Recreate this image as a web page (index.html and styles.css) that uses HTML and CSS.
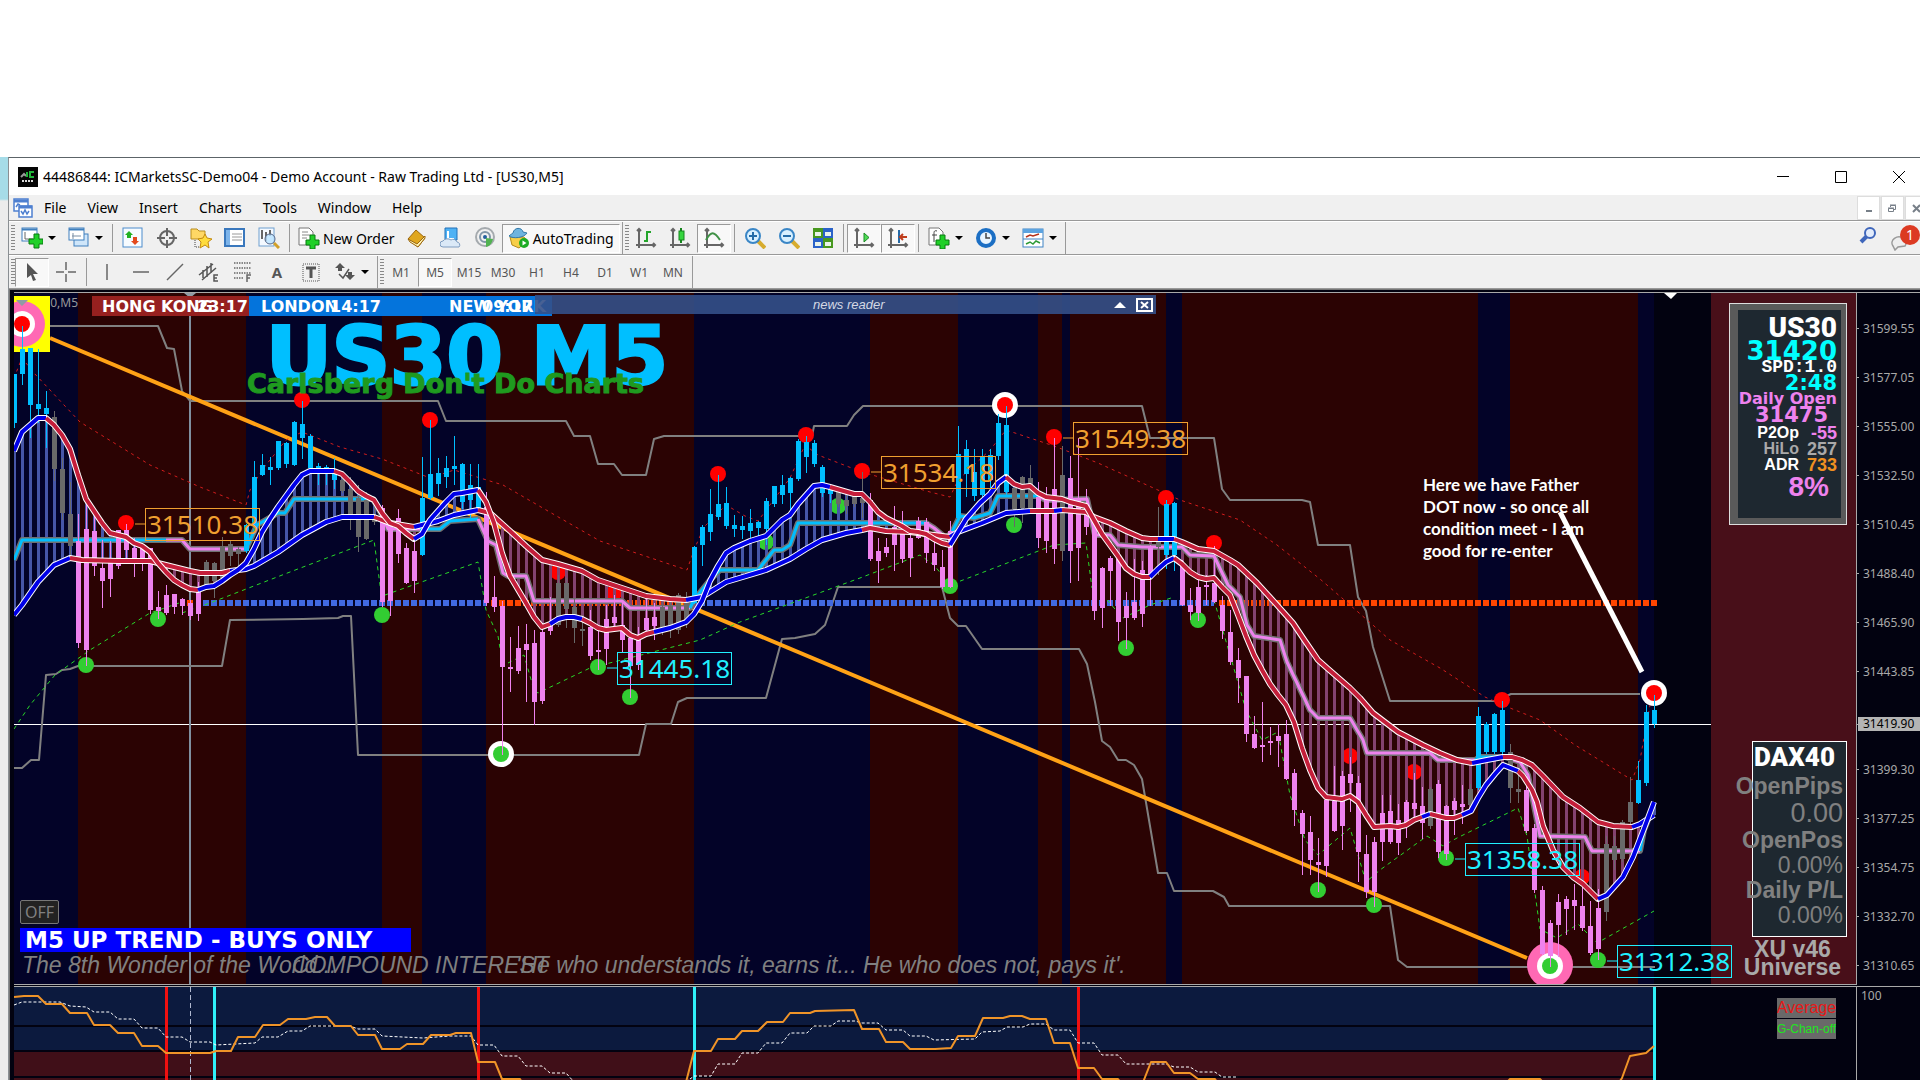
FILE: index.html
```html
<!DOCTYPE html>
<html lang="en">

<head>
    <meta charset="UTF-8">
    <meta name="viewport" content="width=device-width, initial-scale=1.0">
    <title>44486844: ICMarketsSC-Demo04 - Demo Account - Raw Trading Ltd - [US30,M5]</title>
    <link rel="stylesheet" href="styles.css">
</head>

<body>
    <div class="desktop">
        <div class="wallpaper"></div>
        <div class="window">
            <header class="titlebar">
                <svg class="app-icon" width="20" height="20" viewBox="0 0 20 20"><rect width="20" height="20" fill="#050505"/><path d="M3 10l3-3 2 2" stroke="#999" stroke-width="2" fill="none"/><path d="M9 5v5M16 5h-4v5h4" stroke="#21b53a" stroke-width="2" fill="none"/><path d="M4 14h12" stroke="#ddd" stroke-width="2" stroke-dasharray="2 1"/></svg>
                <h1>44486844: ICMarketsSC-Demo04 - Demo Account - Raw Trading Ltd - [US30,M5]</h1>
                <div class="win-buttons">
                    <button aria-label="Minimize"><svg width="12" height="12"><path d="M0 5.5h12" stroke="#000"/></svg></button>
                    <button aria-label="Maximize"><svg width="12" height="12"><path d="M.5.5h11v11H.5z" stroke="#000" fill="none"/></svg></button>
                    <button aria-label="Close"><svg width="12" height="12"><path d="M0 0l12 12M12 0L0 12" stroke="#000"/></svg></button>
                </div>
            </header>

            <nav class="menu">
                <svg width="20" height="20" viewBox="0 0 20 20" fill="#fff" stroke="#4d7fd0" stroke-width="1.5"><rect x="1" y="1" width="14" height="12"/><path d="M1 3h14" stroke-width="3"/><rect x="6" y="8" width="13" height="11"/><path d="M6 9h13" stroke-width="3"/><path d="M3 9l2-3 2 1M8 13l2 3 2-4 2 4 2-3" fill="none"/></svg>
                <button>File</button><button>View</button><button>Insert</button><button>Charts</button><button>Tools</button><button>Window</button><button>Help</button>
                <div class="mdi">
                    <button aria-label="Minimize chart"><svg width="8" height="8"><path d="M1 6h6" stroke="#777f88" stroke-width="2"/></svg></button>
                    <button aria-label="Restore chart"><svg width="9" height="9" fill="none" stroke="#777f88"><path d="M2.5 3V1.5h5v4H6M.5 4.5h5v3h-5zM2 1h6M0 4h6"/></svg></button>
                    <button aria-label="Close chart"><svg width="9" height="9"><path d="M1 1l7 7M8 1L1 8" stroke="#777f88" stroke-width="2"/></svg></button>
                </div>
            </nav>

            <div class="toolbar">
                <i class="grip"></i>
                <button class="tool drop" aria-label="New chart"><svg viewBox="0 0 22 22"><rect x="1" y="1" width="15" height="13" fill="#fff" stroke="#3f7fbd"/><path d="M1 2.5h15" stroke="#3f7fbd" stroke-width="2"/><path d="M4 5v7h8" stroke="#666" fill="none"/><path d="M13 7h5v5h4v5h-4v4h-5v-4H8v-5h5z" fill="#20d028" stroke="#087a10"/></svg></button>
                <button class="tool drop" aria-label="Profiles"><svg viewBox="0 0 22 22"><rect x="6" y="7" width="14" height="12" fill="#cfe6fa" stroke="#3f7fbd"/><rect x="1" y="1" width="15" height="12" fill="#fff" stroke="#3f7fbd"/><path d="M1 2.5h15" stroke="#3f7fbd" stroke-width="2"/><path d="M4 9h9M5 6v6" stroke="#7a8fa5"/></svg></button>
                <i class="sep"></i>
                <button class="tool" aria-label="Market watch"><svg viewBox="0 0 22 22"><rect x="1" y="1" width="19" height="19" fill="#f6fbff" stroke="#4c8ccc"/><path d="M3 8l4-4 4 4H9v3H5V8z" fill="#23b023"/><path d="M9 14l4 4 4-4h-2v-4h-4v4z" fill="#e3491c"/></svg></button>
                <button class="tool" aria-label="Data window"><svg viewBox="0 0 22 22" fill="none" stroke="#666" stroke-width="2"><circle cx="11" cy="11" r="7"/><path d="M11 1v8M11 13v8M1 11h8M13 11h8"/></svg></button>
                <button class="tool" aria-label="Navigator"><svg viewBox="0 0 22 22"><path d="M1 2h6l2 2h6v8H1z" fill="#ffd865" stroke="#b98d1e"/><path d="M5 13v7h5" stroke="#444" fill="none" stroke-dasharray="1 1"/><path d="M15 7l2 4 5 1-4 3 1 6-4-3-5 3 1-6-3-3 5-1z" fill="#ffdc3c" stroke="#c48a10"/></svg></button>
                <button class="tool" aria-label="Terminal"><svg viewBox="0 0 22 22"><rect x="1" y="2" width="19" height="17" fill="#fff" stroke="#3a78bd" stroke-width="2"/><path d="M4 3v15" stroke="#7db4ea" stroke-width="4"/><path d="M8 7h10M8 10h10M8 13h10" stroke="#999"/></svg></button>
                <button class="tool" aria-label="Strategy tester"><svg viewBox="0 0 22 22"><rect x="1" y="1" width="15" height="18" fill="#f4f9ff" stroke="#6f9fd0"/><path d="M4 3v9M8 5v9M12 3v6" stroke="#666" stroke-width="2"/><circle cx="12" cy="12" r="5" fill="#b9e2ff" fill-opacity=".8" stroke="#568"/><path d="M16 16l5 5" stroke="#d2a02a" stroke-width="3"/></svg></button>
                <i class="sep"></i>
                <button class="tool labelled"><svg viewBox="0 0 22 22"><path d="M1 1h10l4 4v13H1z" fill="#fff" stroke="#777"/><path d="M4 5h6M4 8h8M4 11h5" stroke="#888"/><path d="M12 8h5v5h4v5h-4v4h-5v-4H8v-5h4z" fill="#20d028" stroke="#087a10"/></svg>New Order</button>
                <button class="tool" aria-label="MetaEditor"><svg viewBox="0 0 22 22"><path d="M2 12L10 3l9 8-7 9z" fill="#e0a71f" stroke="#9b6710"/><path d="M2 12l2 3 8 5 7-9v-2l-8 8z" fill="#fff2b0" stroke="#9b6710"/></svg></button>
                <button class="tool" aria-label="VPS"><svg viewBox="0 0 22 22"><path d="M5 1h12v12H5z" fill="#4fb2f4" stroke="#2371b8"/><path d="M8 4v8h6" stroke="#fff" stroke-width="2" fill="none"/><path d="M3 20a3 3 0 010-6 5 4 0 018-1 4 4 0 016 2 3 3 0 012 5z" fill="#dbe9f7" stroke="#7e9cc0"/></svg></button>
                <button class="tool" aria-label="Signals"><svg viewBox="0 0 22 22" fill="none"><circle cx="11" cy="10" r="9" stroke="#a5aaae" stroke-width="2"/><circle cx="11" cy="10" r="5" stroke="#8196a8" stroke-width="2"/><circle cx="11" cy="10" r="2" fill="#225f9d"/><path d="M12 11v9c5-1 6-5 7-8" fill="#51b251"/></svg></button>
                <button class="tool labelled on"><svg viewBox="0 0 22 22"><path d="M2 10l14 0 3 4-8 7-7-3z" fill="#f7ce48" stroke="#b48a1a"/><path d="M1 9c2-2 3-2 4-3 1-6 9-6 10-1l4 1c-3 5-14 6-18 3z" fill="#6fb4df" stroke="#3479a8"/><circle cx="16" cy="16" r="5" fill="#1dac25"/><path d="M14.5 13.5l4 2.5-4 2.5z" fill="#fff"/></svg>AutoTrading</button>
                <i class="end"></i>
                <i class="grip"></i>
                <button class="tool" aria-label="Bar chart"><svg viewBox="0 0 22 22" fill="none" stroke="#666" stroke-width="2"><path d="M4 2v19M1 18h19M2 4l2-2 2 2M18 16l2 2-2 2"/><path d="M12 4v11M9 14h3M12 5h4" stroke="#24a52b"/></svg></button>
                <button class="tool" aria-label="Candlesticks"><svg viewBox="0 0 22 22" fill="none" stroke="#666" stroke-width="2"><path d="M4 2v19M1 18h19M2 4l2-2 2 2M18 16l2 2-2 2"/><path d="M12 1v15" stroke="#15851c"/><rect x="10" y="4" width="5" height="9" fill="#35d63e" stroke="#15851c" stroke-width="1"/></svg></button>
                <button class="tool on" aria-label="Line chart"><svg viewBox="0 0 22 22" fill="none" stroke="#666" stroke-width="2"><path d="M4 2v19M1 18h19M2 4l2-2 2 2M18 16l2 2-2 2"/><path d="M3 13c5-9 8-9 14 0" stroke="#3f9146"/></svg></button>
                <i class="sep"></i>
                <button class="tool" aria-label="Zoom in"><svg viewBox="0 0 22 22"><path d="M14 14l7 7" stroke="#d7ac2e" stroke-width="4"/><circle cx="9" cy="9" r="7" fill="#d8f0ff" stroke="#3a86c6" stroke-width="2"/><path d="M5 9h8M9 5v8" stroke="#246ca8" stroke-width="2"/></svg></button>
                <button class="tool" aria-label="Zoom out"><svg viewBox="0 0 22 22"><path d="M14 14l7 7" stroke="#d7ac2e" stroke-width="4"/><circle cx="9" cy="9" r="7" fill="#d8f0ff" stroke="#3a86c6" stroke-width="2"/><path d="M5 9h8" stroke="#246ca8" stroke-width="2"/></svg></button>
                <button class="tool" aria-label="Tile windows"><svg viewBox="0 0 22 22"><path d="M1 1h10v10H1zM11 11h10v10H11z" fill="#48981f"/><path d="M11 1h10v10H11zM1 11h10v10H1z" fill="#2a62c8"/><path d="M3 5h6v4H3zM13 5h6v4h-6zM3 15h6v4H3zM13 15h6v4h-6z" fill="#e9f3ea"/></svg></button>
                <i class="sep"></i>
                <button class="tool on" aria-label="Auto scroll"><svg viewBox="0 0 22 22" fill="none" stroke="#666" stroke-width="2"><path d="M4 2v19M1 18h19M2 4l2-2 2 2M18 16l2 2-2 2"/><path d="M11 6v9l5-4.5z" fill="#4ddb55" stroke="#1c8a24" stroke-width="1"/></svg></button>
                <button class="tool on" aria-label="Chart shift"><svg viewBox="0 0 22 22" fill="none" stroke="#666" stroke-width="2"><path d="M4 2v19M1 18h19M2 4l2-2 2 2M18 16l2 2-2 2"/><path d="M12 3v13" stroke="#2569a6"/><path d="M20 10h-6M16 7l-3 3 3 3" stroke="#bf3d1c"/></svg></button>
                <i class="sep"></i>
                <button class="tool drop" aria-label="Indicators"><svg viewBox="0 0 22 22"><path d="M1 1h10l4 4v13H1z" fill="#fff" stroke="#777"/><path d="M9 4c-3-1-3 1-3 3v8M4 8h5" stroke="#444" fill="none"/><path d="M12 8h5v5h4v5h-4v4h-5v-4H8v-5h4z" fill="#20d028" stroke="#087a10"/></svg></button>
                <button class="tool drop" aria-label="Periods"><svg viewBox="0 0 22 22"><circle cx="11" cy="11" r="8" fill="#e8f5ff" stroke="#1c6fc4" stroke-width="4"/><path d="M11 6v5h4" stroke="#444" fill="none" stroke-width="1.5"/></svg></button>
                <button class="tool drop" aria-label="Templates"><svg viewBox="0 0 22 22"><rect x="1" y="2" width="20" height="18" fill="#fff" stroke="#3e83c4"/><path d="M1 4h20" stroke="#5ca3e0" stroke-width="4"/><path d="M1 12h20" stroke="#3e83c4"/><path d="M4 10l4-2 3 1 6-2" stroke="#b4321c" stroke-width="1.5" fill="none"/><path d="M4 17l4-2 3 2 3-3 4 2" stroke="#2e9a36" stroke-width="1.5" fill="none"/></svg></button>
                <i class="end"></i>
                <div class="right">
                    <button aria-label="Search"><svg width="18" height="18" viewBox="0 0 18 18"><path d="M8 9l-6 6" stroke="#3f66bb" stroke-width="4"/><circle cx="11" cy="6" r="5" fill="#e3ecfb" stroke="#3f66bb" stroke-width="2"/></svg></button>
                    <button class="chat" aria-label="Messages"><svg width="20" height="20" viewBox="0 0 20 20"><path d="M3 15a7 6 0 1112 0l-7 1-3 3z" fill="#eee" stroke="#999" stroke-width="1.5"/></svg><span class="badge">1</span></button>
                </div>
            </div>

            <div class="toolbar">
                <i class="grip"></i>
                <button class="tool on" aria-label="Cursor"><svg viewBox="0 0 22 22"><path d="M6 2v15l4-3 2 6 3-1-3-6h5z" fill="#555"/></svg></button>
                <button class="tool" aria-label="Crosshair"><svg viewBox="0 0 22 22" stroke="#666" stroke-width="1.5"><path d="M11 1v8M11 13v8M1 11h8M13 11h8"/></svg></button>
                <i class="sep"></i>
                <button class="tool" aria-label="Vertical line"><svg viewBox="0 0 22 22" stroke="#666" stroke-width="1.5"><path d="M11 3v16"/></svg></button>
                <button class="tool" aria-label="Horizontal line"><svg viewBox="0 0 22 22" stroke="#666" stroke-width="1.5"><path d="M3 11h16"/></svg></button>
                <button class="tool" aria-label="Trendline"><svg viewBox="0 0 22 22" stroke="#666" stroke-width="1.5"><path d="M3 19L19 3"/></svg></button>
                <button class="tool" aria-label="Equidistant channel"><svg viewBox="0 0 22 22" stroke="#555" stroke-width="1.5" fill="none"><path d="M1 14L15 3M4 19L18 7M5 17V9M9 16V5M13 12V2"/><path d="M20 14h-4v6h4M16 17h3"/></svg></button>
                <button class="tool" aria-label="Fibonacci"><svg viewBox="0 0 22 22" stroke="#666" stroke-width="1.5" fill="none"><path d="M2 2h17M2 7h17M2 12h17M2 17h10" stroke-dasharray="1.5 1"/><path d="M19 14h-4v7M15 17h3"/></svg></button>
                <button class="tool letter">A</button>
                <button class="tool" aria-label="Text label"><svg viewBox="0 0 22 22" stroke="#555" fill="none"><rect x="3" y="3" width="16" height="17" stroke-dasharray="1 1"/><path d="M6 7h10M11 7v10" stroke-width="3"/></svg></button>
                <button class="tool drop" aria-label="Arrows"><svg viewBox="0 0 22 22" fill="#555"><path d="M6 2l5 5H8v3H4V7H1zM16 19l5-5h-3v-3h-4v3h-3z"/><path d="M5 13l4 4 6-9" stroke="#555" fill="none" stroke-width="1.5"/></svg></button>
                <i class="end"></i>
                <i class="grip"></i>
                <button class="tool">M1</button><button class="tool on">M5</button><button class="tool">M15</button><button class="tool">M30</button><button class="tool">H1</button><button class="tool">H4</button><button class="tool">D1</button><button class="tool">W1</button><button class="tool">MN</button>
                <i class="end"></i>
            </div>

            <main class="terminal">
                <section class="main-pane">
                    <div class="plot">
                        <svg id="chart" viewBox="14 293 1842 691" preserveAspectRatio="xMinYMin slice">
                            <g id="layers"></g>
                            <text class="symbol" x="28" y="307">US30,M5</text>
                            <g id="marks"></g>
                            <text class="watermark" x="266" y="384">US30 M5</text>
                            <text class="slogan" x="247" y="393">Carlsberg Don't Do Charts</text>
                            <g class="sessions">
                                <rect x="92" y="296" width="157" height="20" fill="#96201f"/>
                                <rect x="249" y="296" width="303" height="20" fill="#0474dc"/>
                                <text x="102" y="312">HONG KONG</text><text x="197" y="312">23:17</text>
                                <text x="261" y="312">LONDON</text><text x="330" y="312">14:17</text>
                                <text x="449" y="312">NEW YORK</text><text x="482" y="312">09:17</text>
                            </g>
                            <g class="note">
                                <text x="1423" y="491">Here we have Father</text>
                                <text x="1423" y="513">DOT now - so once all</text>
                                <text x="1423" y="535">condition meet - I am</text>
                                <text x="1423" y="557">good for re-enter</text>
                            </g>
                            <path d="M1560 512L1642 672" stroke="#fff" stroke-width="5"/>
                            <g class="quote">
                                <text x="22" y="973">The 8th Wonder of the World...</text>
                                <text x="292" y="973">COMPOUND INTEREST</text>
                                <text x="516" y="973">'He who understands it, earns it... He who does not, pays it'.</text>
                            </g>
                        </svg>
                        <div class="news">
                            <span>news reader</span>
                            <button aria-label="Collapse"><svg width="12" height="6"><path d="M0 6l6-6 6 6z" fill="#fff"/></svg></button>
                            <button aria-label="Close news"><svg width="17" height="14" fill="none" stroke="#fff" stroke-width="2"><path d="M1 1h15v12H1zM5 4l7 6M12 4l-7 6"/></svg></button>
                        </div>
                        <div class="trend">
                            <button class="off">OFF</button>
                            <p>M5 UP TREND - BUYS ONLY</p>
                        </div>
                        <aside class="info">
                            <h2>US30</h2>
                            <p class="price">31420</p>
                            <p class="spread">SPD:1.0</p>
                            <p class="timer">2:48</p>
                            <p class="daily">Daily Open</p>
                            <p class="open">31475</p>
                            <dl>
                                <div><dt>P2Op</dt><dd class="pink">-55</dd></div>
                                <div class="dim"><dt>HiLo</dt><dd>257</dd></div>
                                <div><dt>ADR</dt><dd class="gold">733</dd></div>
                            </dl>
                            <p class="percent">8%</p>
                        </aside>
                        <aside class="account">
                            <h2>DAX40</h2>
                            <p>OpenPips</p>
                            <p class="lcd big">0.00</p>
                            <p>OpenPos</p>
                            <p class="lcd">0.00%</p>
                            <p>Daily P/L</p>
                            <p class="lcd">0.00%</p>
                        </aside>
                        <p class="version">XU v46<br>Universe</p>
                    </div>
                    <ol class="axis">
                        <li>31599.55</li><li>31577.05</li><li>31555.00</li><li>31532.50</li><li>31510.45</li><li>31488.40</li><li>31465.90</li><li>31443.85</li><li class="now"><b>31419.90</b></li><li>31399.30</li><li>31377.25</li><li>31354.75</li><li>31332.70</li><li>31310.65</li>
                    </ol>
                </section>
                <section class="sub-pane">
                    <div class="plot">
                        <svg id="osc" viewBox="14 987 1842 93" preserveAspectRatio="xMinYMin slice"></svg>
                        <div class="switches">
                            <button class="avg">Average</button>
                            <button class="chan">G-Chan-off</button>
                        </div>
                    </div>
                    <div class="scale">100</div>
                </section>
            </main>
        </div>
    </div>
    <script src="chart.js"></script>
</body>

</html>
```

FILE: styles.css
```css
* {
    box-sizing: border-box;
    margin: 0;
    padding: 0;
}

body {
    background: #fff;
    font-family: "Noto Sans", "Open Sans", sans-serif;
    overflow: hidden;
}

button {
    border: 0;
    background: none;
    font: inherit;
    color: inherit;
}

.desktop {
    display: flex;
    height: 100vh;
    padding-top: 157px;
}

.wallpaper {
    width: 8px;
    background: linear-gradient(#a6dce8 42px, #ececec 44px);
}

.window {
    flex: 1;
    min-width: 0;
    display: flex;
    flex-direction: column;
    border-top: 1px solid #5c6468;
    border-left: 1px solid #8a8f93;
    background: #f0f0f0;
}

.titlebar {
    display: flex;
    align-items: center;
    height: 37px;
    padding-left: 9px;
    background: #fff;
}

.titlebar h1 {
    flex: 1;
    padding-left: 5px;
    font-size: 14px;
    font-weight: 400;
}

.win-buttons {
    display: flex;
    margin-right: -8px;
}

.win-buttons button {
    width: 58px;
    height: 36px;
}

.win-buttons svg {
    display: block;
    margin: 0 auto;
}

.menu {
    display: flex;
    align-items: center;
    gap: 1px;
    height: 26px;
    padding-left: 4px;
    border-bottom: 1px solid #999;
    font-size: 14px;
}

.menu > button {
    padding: 0 10px;
}

.mdi {
    display: flex;
    gap: 1px;
    height: 24px;
    margin-left: auto;
    margin-right: -8px;
    background: #e4e4e4;
}

.mdi button {
    width: 23px;
    background: #fff;
    border: 1px solid #ddd;
}

/* toolbars */

.toolbar {
    display: flex;
    align-items: center;
    height: 34px;
    padding-left: 2px;
    border-top: 1px solid #fff;
    border-bottom: 1px solid #999;
}

.grip {
    width: 4px;
    height: 26px;
    background: repeating-linear-gradient(#888 0 1px, #f0f0f0 1px 3px);
}

.sep,
.end {
    width: 1px;
    height: 28px;
    margin: 0 3px;
    background: #999;
}

.end {
    height: 32px;
    margin: 0 2px;
}

.tool {
    display: flex;
    align-items: center;
    justify-content: center;
    flex: none;
    width: 34px;
    height: 29px;
    color: #555;
    font-size: 12px;
}

.tool svg {
    flex: none;
    width: 22px;
    height: 22px;
}

.tool.on {
    background: #f8f8f8;
    border: 1px solid #fff;
    border-top-color: #999;
    border-left-color: #999;
}

.drop {
    width: 47px;
    gap: 5px;
}

.drop::after {
    content: "";
    border: 4px solid transparent;
    border-top-color: #000;
    border-bottom: 0;
}

.labelled {
    width: auto;
    padding: 0 5px;
    gap: 3px;
    color: #000;
    font-size: 14px;
}

.letter {
    font-size: 15px;
    font-weight: 700;
}

.right {
    display: flex;
    align-items: center;
    gap: 13px;
    margin-left: auto;
}

.chat {
    position: relative;
    width: 30px;
    height: 30px;
    text-align: left;
}

.chat svg {
    margin-top: 8px;
}

.badge {
    position: absolute;
    top: 2px;
    right: 0;
    width: 20px;
    height: 20px;
    border-radius: 50%;
    background: #dc3a22;
    color: #fff;
    font-size: 14px;
    line-height: 20px;
    text-align: center;
}

/* chart window */

.terminal {
    flex: 1;
    min-height: 0;
    display: flex;
    flex-direction: column;
    padding: 2px 0 0 4px;
    border-top: 1px solid #777;
    border-left: 1px solid #777;
    background: #020210;
    color: #a9a9a9;
}

.main-pane,
.sub-pane {
    display: flex;
    border-top: 1px solid #a9a9a9;
}

.main-pane {
    flex: none;
    margin-bottom: 1px;
}

.sub-pane {
    flex: 1;
}

.plot {
    position: relative;
    flex: 1;
    min-width: 0;
    border-right: 1px solid #a9a9a9;
    overflow: hidden;
}

.main-pane .plot {
    border-bottom: 1px solid #a9a9a9;
}

.plot > svg {
    display: block;
    width: 100%;
}

.axis {
    width: 63px;
    margin-bottom: -12px;
    padding-top: 11px;
    list-style: none;
    font-size: 12px;
}

.axis li {
    display: flex;
    align-items: center;
    gap: 4px;
    height: 49px;
}

.axis li::before {
    content: "";
    width: 2px;
    height: 1px;
    background: #a9a9a9;
}

.axis .now {
    padding-top: 7px;
}

.axis b {
    flex: 1;
    margin-left: -5px;
    padding-left: 5px;
    background: #b4b4b4;
    color: #000;
    font-weight: 400;
    line-height: 14px;
}

.scale {
    width: 63px;
    padding-left: 4px;
    font-size: 12px;
    line-height: 18px;
}

.symbol {
    fill: #999;
    font: 12px "Noto Sans", sans-serif;
}

.watermark {
    fill: #00bfff;
    stroke: #00bfff;
    stroke-width: 3px;
    font: 700 81px "DejaVu Sans", sans-serif;
}

.slogan {
    fill: #1f9a1f;
    stroke: #1f9a1f;
    font: 700 27px "DejaVu Sans", sans-serif;
}

.sessions text {
    fill: #fff;
    font: 700 16px "DejaVu Sans", sans-serif;
}

.note text {
    fill: #fff;
    font: 700 17px Lato, sans-serif;
}

.quote text {
    fill: #808080;
    font: italic 23px "Liberation Sans", sans-serif;
}

.tag text {
    font: 26px "Noto Sans", sans-serif;
}

.news {
    position: absolute;
    top: 2px;
    left: 521px;
    display: flex;
    align-items: center;
    width: 621px;
    height: 19px;
    background: rgba(52, 80, 136, .9);
}

.news span {
    flex: 1;
    padding-left: 278px;
    color: #d4d8e4;
    font: italic 13px "Liberation Sans", sans-serif;
}

.news button {
    display: flex;
    align-items: center;
    justify-content: center;
    width: 24px;
    height: 19px;
}

.trend {
    position: absolute;
    left: 6px;
    bottom: 32px;
}

.off {
    display: block;
    width: 39px;
    height: 24px;
    margin-bottom: 4px;
    border: 1px solid #777;
    border-radius: 2px;
    background: #222;
    color: #808080;
    font-size: 16px;
    line-height: 20px;
}

.trend p {
    width: 391px;
    padding-left: 5px;
    background: #00f;
    color: #fff;
    font: 700 23px/24px "DejaVu Sans", sans-serif;
    white-space: nowrap;
}

/* panels on the right */

.info {
    position: absolute;
    top: 10px;
    right: 9px;
    width: 118px;
    height: 222px;
    padding: 5px 4px 0 0;
    background: #1e2830;
    border: 7px solid #5a5a5a;
    border-left-width: 9px;
    border-right-width: 6px;
    outline: 1px solid #ddd;
    outline-offset: -1px;
    text-align: right;
    font-family: "Liberation Sans", sans-serif;
    font-weight: 700;
    color: #fff;
}

.info h2,
.account h2 {
    font: 900 28px/26px Roboto, sans-serif;
    color: #fff;
}

.price,
.timer,
.open {
    color: #0ff;
    font: 700 26px/20px "DejaVu Sans", sans-serif;
}

.timer,
.open {
    font-size: 21px;
}

.spread {
    font: 700 18px/12px "Liberation Mono", monospace;
}

.daily {
    display: flex;
    justify-content: flex-end;
    color: #ee82ee;
    font: 700 16px/12px "DejaVu Sans", sans-serif;
    white-space: nowrap;
}

.open {
    padding-right: 9px;
    color: #ee82ee;
}

.info dl {
    font-size: 16px;
    line-height: 16px;
}

.info dl div {
    display: flex;
    justify-content: flex-end;
}

.info dd {
    width: 38px;
    font-size: 18px;
}

.dim {
    color: #a9a9a9;
}

.pink {
    color: #ee82ee;
}

.gold {
    color: #f09020;
}

.percent {
    padding-right: 8px;
    color: #ee82ee;
    font-size: 28px;
    line-height: 28px;
}

.account {
    position: absolute;
    top: 448px;
    right: 9px;
    display: flex;
    flex-direction: column;
    align-items: flex-end;
    width: 95px;
    height: 196px;
    padding-right: 3px;
    background: #1e2830;
    border: 1px solid #fff;
    color: #808080;
    font: 700 23px/24px "Liberation Sans", sans-serif;
    white-space: nowrap;
}

.account h2 {
    padding-right: 8px;
    font-size: 26px;
    line-height: 30px;
    margin-bottom: 2px;
}

.lcd {
    font-weight: 400;
    line-height: 26px;
}

.big {
    font-size: 27px;
    line-height: 30px;
}

.version {
    position: absolute;
    right: 15px;
    bottom: 8px;
    color: #a9a9a9;
    font: 700 23px/18px "Liberation Sans", sans-serif;
    text-align: center;
}

.switches {
    position: absolute;
    top: 11px;
    right: 20px;
    display: flex;
    flex-direction: column;
    gap: 1px;
}

.switches button {
    display: flex;
    justify-content: center;
    align-items: center;
    width: 59px;
    height: 20px;
    overflow: hidden;
    background: #696969;
    font: 16px "Liberation Sans", sans-serif;
    white-space: nowrap;
}

.switches .avg {
    color: #e81818;
}

.switches .chan {
    color: #1ee61e;
    font-size: 12px;
}
```

FILE: chart.js
```js
// one bar every 8px: high, body top, body bottom, low, colour
var BARS = "374 374 423 428 s|326 349 374 385 s|348 348 405 438 s|349 404 409 423 s|391 408 414 448 s|411 417 469 481 g|458 469 513 520 g|482 514 546 557 g|514 541 643 648 v|504 529 650 666 v|" +
    "515 531 566 576 v|540 568 581 608 v|541 560 579 597 v|530 530 566 569 v|524 530 550 562 v|538 548 560 577 v|543 547 562 571 v|548 548 610 614 v|591 607 611 619 v|585 595 613 615 v|" +
    "594 594 607 614 v|598 599 606 615 v|600 603 616 620 v|582 591 614 621 v|560 562 585 587 g|562 563 581 598 g|537 546 578 580 g|540 544 556 566 g|547 549 554 568 g|524 525 551 553 s|" +
    "461 477 525 527 s|454 465 475 476 s|457 467 470 485 s|441 441 468 470 s|442 443 464 468 s|421 422 465 466 s|401 424 438 459 s|434 436 468 470 s|463 466 470 485 s|465 467 470 485 s|" +
    "458 469 480 489 s|472 480 491 493 g|477 489 516 530 g|485 498 537 552 g|492 500 539 540 g|498 515 522 525 g|505 508 602 607 v|520 522 601 616 v|509 518 554 563 v|543 548 583 584 v|" +
    "540 551 581 593 v|457 498 555 556 s|420 474 498 500 s|458 473 484 496 s|456 468 477 488 s|436 466 469 485 s|463 464 502 509 s|464 485 500 518 s|464 487 510 512 s|492 507 603 606 v|" +
    "576 597 607 612 v|601 606 667 755 v|637 667 669 692 v|626 648 671 674 v|624 644 650 702 v|630 643 702 725 v|628 632 701 704 v|597 622 631 635 v|575 583 625 627 g|578 583 609 628 g|" +
    "598 607 628 643 g|615 629 631 646 g|610 627 656 660 v|628 650 652 670 v|605 619 649 665 v|595 617 623 628 v|600 625 640 652 v|632 638 666 698 v|627 638 665 670 v|598 618 630 633 v|" +
    "603 617 626 640 v|602 607 632 635 g|598 606 630 638 g|593 595 630 634 g|592 602 622 628 g|546 547 603 604 s|525 527 545 566 s|489 514 532 541 s|475 504 517 520 s|487 503 526 529 s|" +
    "515 525 529 537 s|516 526 530 539 s|509 523 531 540 s|521 522 528 540 s|498 501 529 545 s|486 486 504 507 s|475 485 495 504 s|477 478 493 519 s|439 441 479 481 s|436 442 457 473 s|" +
    "440 443 464 467 s|465 467 493 497 s|487 488 494 503 s|490 492 504 507 g|493 500 506 514 g|493 496 504 507 g|472 498 503 518 g|493 500 559 561 v|538 551 561 583 v|538 547 553 557 v|" +
    "506 527 545 571 v|511 532 559 563 v|535 538 558 577 v|517 521 538 539 v|518 522 553 563 v|542 553 565 571 v|550 567 587 589 v|521 531 587 588 v|426 454 518 520 s|440 449 474 497 s|" +
    "449 472 496 501 s|449 456 495 497 s|449 455 480 490 s|414 423 456 460 s|406 425 492 497 s|485 488 509 527 g|476 477 508 523 g|465 478 508 510 g|482 497 538 548 v|487 495 541 553 v|" +
    "438 489 549 564 v|446 475 551 561 g|456 478 551 583 v|438 498 548 581 v|489 503 527 535 v|518 522 611 620 v|567 568 608 628 v|556 558 571 606 v|555 559 622 641 v|592 606 618 649 v|" +
    "559 602 618 620 v|561 570 614 627 v|545 547 575 606 v|507 542 547 575 g|500 504 555 569 s|502 503 555 571 s|560 565 605 606 v|588 605 612 620 v|578 587 613 621 v|575 585 587 605 v|" +
    "546 583 602 603 v|596 605 631 639 v|610 632 662 665 v|648 660 678 703 v|676 676 734 742 v|716 734 748 749 v|702 745 747 762 v|727 741 743 755 v|724 736 741 767 v|720 734 779 780 v|" +
    "769 773 810 826 v|810 813 834 875 v|816 832 860 875 v|838 862 865 892 v|798 800 866 877 v|766 801 831 832 v|771 776 826 850 v|757 774 783 812 v|776 783 852 882 v|835 854 892 898 v|" +
    "837 842 892 907 v|795 813 842 861 v|795 811 842 844 v|804 820 843 855 v|800 802 823 838 v|773 803 809 823 v|787 806 823 839 v|787 789 826 829 g|780 784 852 858 v|805 806 854 860 v|" +
    "798 801 810 835 v|785 804 807 824 v|784 789 805 810 g|707 716 788 790 s|722 724 752 754 s|713 714 752 754 s|701 710 752 754 s|744 752 788 803 g|767 789 792 803 g|777 790 831 833 v|" +
    "824 828 890 893 v|886 890 954 955 v|920 923 956 967 v|894 902 925 957 v|896 899 909 935 v|884 900 906 930 v|884 906 928 931 v|901 926 953 955 v|889 908 949 960 v|836 844 912 921 g|" +
    "836 846 860 870 g|820 822 859 862 g|777 802 822 825 g|761 780 803 804 s|705 712 783 786 s|695 710 724 728 s";

var COLOR = { s: "#00bfff", v: "#ee82ee", g: "#696969", b: "#0000e6", r: "#c41e3a" };

// lines are runs of "colour x,y x,y ..."
var FAST = "b 14,451 22,432 38,418 46,418|r 54,425 62,435 70,449 78,475 86,499 102,523 110,533 126,537 134,543 142,546 150,552 158,563 166,572 174,580 182,585 190,589 198,590|b 206,587 214,586 222,581 230,575 238,570 246,563 254,549 262,532 270,519 278,507 286,496 294,485 302,475 310,471 334,471|r 342,474 350,482 358,491 366,496 374,500 382,513 390,523 398,526 406,533 414,539|b 422,534 430,520 438,511 446,502 454,494 462,493 478,490|r 486,502 494,523 502,553 510,576 526,603 534,617 542,627 550,624|b 558,619 566,617 574,617 582,619|r 590,623 598,628 606,630 614,629 622,628 630,635 638,638 646,634 654,632|b 670,628 686,622 694,614 702,601 710,581 718,566 726,553 734,548 750,541 766,536 774,528 782,520 790,515 798,504 806,495 814,486 822,485 830,487|r 854,494 862,494 870,502 878,512 886,518 902,526 910,531 918,532 926,534 934,539 942,543 950,545|b 958,532 966,519 980,503 990,494 998,483 1006,477|r 1014,484 1022,487 1030,486 1038,493 1046,497 1062,499 1070,502 1078,504 1086,506 1094,520 1102,534 1110,545 1118,556 1126,568 1134,574 1142,577 1150,577|b 1158,569 1166,562 1174,558|r 1182,564 1190,572 1198,577 1206,579 1214,578 1222,587 1230,595 1238,615 1246,636 1254,655 1262,670 1270,684 1278,695 1286,705 1294,722 1302,748 1310,770 1318,788 1326,797 1342,799 1350,796 1358,802 1366,815 1374,827 1390,826 1398,827 1406,825 1414,820 1422,817|b 1430,814|r 1438,816 1446,818 1454,818 1462,815|b 1471,811 1478,798 1486,785 1495,774 1503,765 1518,771|r 1523,776 1532,790 1537,802 1543,826 1553,850 1563,867 1573,877 1583,884 1598,899|b 1607,895 1623,877 1633,857 1645,826 1654,802";
var SLOW = "b 14,615 22,605 38,582 54,565 70,558|r 82,560 118,561 150,561 166,565 190,571 200,573 222,573 230,571|b 246,569 254,566 278,552 302,535 326,522 342,517 374,517|r 390,523 414,527|b 438,521 454,515 478,510|r 490,513 500,522 510,531 526,546 542,560 558,564 582,571 598,580 622,588 646,596 670,599 686,600|b 702,597 718,587 726,582 766,570 790,559 806,549 822,540 846,533 862,530|r 870,528 886,531 910,532 926,534 942,536 950,537|b 958,532 982,523 1006,513 1030,511|r 1054,511|b 1062,510|r 1086,512 1094,517 1110,523 1126,531 1142,538 1150,539 1158,539|b 1174,539|r 1182,542 1198,549 1214,551 1230,560 1238,565 1257,583 1277,605 1293,623 1303,638 1318,660 1327,668 1350,688 1360,698 1373,713 1398,732 1423,745 1440,753 1457,760 1472,763|b 1487,760 1503,757|r 1512,757 1522,760 1532,765 1543,776 1563,797 1580,808 1598,822 1613,826 1632,827|b 1640,824 1654,815";
var BASE = "s 14,560 22,540 166,540|v 182,540 190,549 246,549|s 257,525 278,513 285,513 294,499 373,499|v 382,515 388,529 422,529|s 440,529 450,521 478,519|v 488,541 496,545 503,573 508,576 526,576 534,601 622,601 630,608 690,608|s 694,600 710,580 720,570 758,570 774,550 782,550 790,545 798,523 926,523|v 934,528 946,538|s 952,532 960,516 974,518 990,513 998,496 1038,496|v 1046,500 1087,499 1095,535 1110,535 1118,545 1142,547 1182,547 1190,555 1214,556 1228,585 1240,597 1247,625 1254,636 1280,640 1287,662 1310,710 1318,718 1350,718 1363,740 1367,753 1430,753 1438,760 1475,760|s 1480,757 1505,757|v 1520,762 1528,775 1540,836 1585,837 1592,851 1640,851|s 1644,830 1650,815";

var UPPER = "50,326 158,326 167,348 174,349 182,391 190,401 438,401 446,421 566,421 574,436 590,436 598,464 614,464 622,475 646,475 654,439 664,436 812,436 814,426 847,426 854,415 863,406 1142,406 1150,438 1214,438 1222,489 1230,500 1302,500 1310,502 1318,545 1350,545 1358,597 1366,611 1373,647 1390,701 1495,701 1511,694 1640,694";
var LOWER = "14,768 22,768 31,760 39,760 46,675 56,674 62,670 70,669 78,666 222,666 230,620 303,619 338,618 343,616 351,616 358,755 639,755 646,724 671,724 678,702 687,698 766,698 782,639 795,638 815,634 825,625 838,587 942,587 950,618 958,626 966,626 982,649 1079,649 1087,664 1095,702 1102,741 1110,747 1118,760 1126,760 1134,765 1142,779 1158,873 1167,873 1174,891 1213,891 1224,897 1229,906 1390,906 1398,960 1407,967 1655,967";
var RED_DOTS = "14,378 22,358 34,373 80,422 150,465 200,487 246,505 250,490 262,470 286,440 302,432 340,447 382,459 430,478 454,470 503,485 560,518 600,541 687,570 694,550 704,527 726,505 745,516 758,521 790,478 805,445 818,455 862,472 930,492 950,497 958,480 990,450 1006,430 1054,446 1098,463 1180,500 1240,520 1277,545 1320,579 1350,605 1390,640 1440,668 1485,697 1510,708 1540,720 1575,745 1632,780 1640,760 1650,705";
var GREEN_DOTS = "14,729 30,705 55,675 90,650 150,613 182,602|182,613 210,603 290,572 374,540 382,600|385,595 430,579 478,562 486,610 498,636 502,660|508,663 524,655 534,690 538,693 590,668 700,640 740,622 860,578 920,555 934,565 950,585 1054,545 1086,543 1092,588|1107,600 1123,618 1150,605 1174,597|1214,600 1246,710 1262,740 1278,732 1290,795 1305,840 1318,855 1350,828 1366,882 1380,870 1427,836 1443,846 1457,838 1518,808 1527,836 1540,929 1557,938 1578,924 1597,943 1654,911";

// background bands: start x and trend, each one ends where the next starts
var BANDS = [[14, 0], [78, 1], [246, 0], [382, 1], [422, 0], [486, 1], [694, 0], [870, 1], [958, 0], [1038, 1], [1062, 0], [1070, 1], [1166, 0], [1182, 1], [1478, 0], [1510, 1], [1638, 0], [1654, 2]];

var HIGHS = [[126, 523], [302, 400], [430, 420], [558, 572], [614, 593], [718, 474], [806, 435], [862, 471], [1054, 437], [1166, 498], [1214, 543], [1350, 756], [1414, 772], [1502, 700], [1582, 877]];
var LOWS = [[86, 665], [158, 619], [382, 615], [598, 667], [630, 697], [766, 542], [838, 506], [950, 586], [1014, 525], [1126, 648], [1198, 620], [1318, 890], [1374, 905], [1446, 858], [1598, 960]];
var TAGS = [[145, 508, "31510.38", 0], [881, 456, "31534.18", 0], [1073, 422, "31549.38", 0], [617, 652, "31445.18", 1], [1465, 843, "31358.38", 1], [1617, 945, "31312.38", 1]];

var AVG = "14,997 24,996 38,996 46,1004 62,1004 70,1013 87,1013 94,1025 110,1025 118,1033 134,1033 142,1046 158,1046 166,1053 210,1053 216,1051 231,1051 238,1037 255,1037 263,1025 280,1025 288,1019 306,1019 315,1017 327,1017 335,1026 351,1026 358,1035 375,1035 382,1049 400,1049 407,1044 423,1044 431,1035 450,1035 456,1033 471,1033 478,1062 495,1062 502,1079 520,1079 526,1090 684,1090 694,1051 711,1051 718,1039 735,1039 742,1031 758,1031 767,1022 783,1022 790,1013 810,1013 815,1011 854,1010 862,1029 879,1029 886,1042 903,1042 910,1049 935,1049 951,1048 958,1036 975,1036 983,1018 1003,1018 1010,1016 1022,1016 1030,1019 1046,1019 1054,1043 1070,1043 1078,1068 1094,1068 1102,1079 1118,1079 1126,1090 1140,1090 1151,1062 1166,1062 1174,1073 1190,1073 1198,1079 1215,1079 1222,1090 1500,1090 1510,1079 1540,1079 1550,1090 1614,1090 1622,1078 1630,1056 1646,1053 1654,1046";
var SIGNAL = "14,1005 22,1002 60,1002 70,1006 86,1007 94,1012 110,1012 118,1019 134,1019 142,1028 158,1028 166,1037 182,1037 190,1042 210,1042 216,1045 235,1044 255,1043 262,1037 278,1037 288,1031 302,1031 310,1026 350,1026 358,1029 375,1029 382,1036 423,1038 450,1036 471,1036 478,1045 494,1045 502,1056 518,1056 526,1066 542,1066 550,1073 566,1073 574,1082|686,1082 694,1076 711,1076 718,1064 735,1064 742,1053 758,1053 766,1043 782,1043 790,1033 807,1033 814,1026 831,1026 838,1021 855,1021 862,1023 878,1023 886,1030 903,1030 910,1036 926,1036 934,1040 975,1039 982,1032 1000,1031 1007,1027 1023,1027 1030,1024 1046,1024 1054,1030 1070,1030 1078,1043 1094,1043 1102,1055 1118,1055 1126,1064 1166,1064 1174,1067 1190,1067 1198,1072 1215,1072 1222,1077 1238,1077";

function rect(x, y, w, h, fill) {
    return '<rect x="' + x + '" y="' + y + '" width="' + w + '" height="' + h + '" fill="' + fill + '" shape-rendering="crispEdges"/>';
}

function line(points, color, width, dash) {
    return points.split("|").map(function (p) {
        return '<polyline points="' + p + '" fill="none" stroke="' + color + '" stroke-width="' + width + '"' +
            (dash ? ' stroke-dasharray="' + dash + '"' : '') + ' stroke-linejoin="round"/>';
    }).join("");
}

function circle(x, y, r, fill) {
    return '<circle cx="' + x + '" cy="' + y + '" r="' + r + '" fill="' + fill + '"/>';
}

// split a coloured line into runs, every run starts on the last point of the one before
function runs(data) {
    var last = "";
    return data.split("|").map(function (run) {
        var points = run.slice(2);
        var all = last ? last + " " + points : points;
        last = points.split(" ").pop();
        return { color: COLOR[run[0]], points: all };
    });
}

function whole(data) {
    return data.replace(/\|?[a-z] /g, " ").trim();
}

function valueAt(data, x) {
    var pts = whole(data).split(" ").map(function (p) { return p.split(",").map(Number); });
    for (var i = 1; i < pts.length; i++) {
        if (x <= pts[i][0]) {
            var a = pts[i - 1], b = pts[i];
            return a[1] + (b[1] - a[1]) * (x - a[0]) / (b[0] - a[0]);
        }
    }
    return pts[pts.length - 1][1];
}

function colored(data, width) {
    return runs(data).map(function (r) { return line(r.points, r.color, width); }).join("");
}

function drawChart() {
    var out = "", i;
    BANDS.forEach(function (b, n) {
        var end = n + 1 < BANDS.length ? BANDS[n + 1][0] : 1711;
        out += rect(b[0], 293, end - b[0], 691, ["#030328", "#2b0303", "#020210"][b[1]]);
    });
    out += rect(1711, 293, 145, 691, "#480f19");
    out += rect(14, 724, 1697, 1, "#fff");
    out += rect(189, 293, 2, 691, "#8090a0");
    out += line(UPPER, "#808080", 2) + line(LOWER, "#808080", 2);
    out += line("50,338 1527,958", "#ffa216", 4);
    // daily open
    out += line("187,603 193,603", "#ff4500", 6);
    out += line("203,603 486,603", "#4169e1", 6, "6 2") + line("491,603 690,603", "#ff4500", 6, "6 2");
    out += line("691,603 1214,603", "#4169e1", 6, "6 2") + line("1219,603 1658,603", "#ff4500", 6, "6 2");
    out += line(RED_DOTS, "#d01c1c", 1, "3 4") + line(GREEN_DOTS, "#28d828", 1, "4 4");
    document.getElementById("layers").innerHTML = out;

    out = rect(14, 296, 36, 56, "#ff0") + circle(22, 324, 23, "#ff69b4") + circle(22, 324, 13, "#fff") + circle(22, 324, 8, "#f00");
    out += circle(1550, 965, 23, "#ff69b4");
    out += '<path d="M184 293h12l-6 5zM16 300h12l-6 6z" fill="#8f9ba5"/><path d="M1664 293h13l-6 6z" fill="#fff"/>';
    [[501, 754, "#32cd32"], [1005, 405, "#f00"], [1654, 693, "#f00"], [1550, 966, "#32cd32"]].forEach(function (d) {
        out += circle(d[0], d[1], 13, "#fff") + circle(d[0], d[1], 8, d[2]);
    });
    HIGHS.forEach(function (d) { out += circle(d[0], d[1], 8, "#f00"); });
    LOWS.forEach(function (d) { out += circle(d[0], d[1], 8, "#32cd32"); });

    // channel between both averages
    for (i = 0; i < 206; i++) {
        var x = 14 + i * 8, f = valueAt(FAST, x), s = valueAt(SLOW, x);
        out += rect(x - 1, Math.min(f, s), 3, Math.abs(f - s), f < s ? "#4656a8" : "#84426f");
    }
    out += line(whole(BASE), "#707070", 6) + colored(BASE, 3);
    BARS.split("|").forEach(function (bar, n) {
        var v = bar.split(" "), x = 14 + n * 8, c = COLOR[v[4]];
        out += rect(x, v[0], 1, v[3] - v[0], c) + rect(x - 2, v[1], 5, v[2] - v[1], c);
    });
    [SLOW, FAST].forEach(function (ma) {
        out += line(whole(ma), "#fff", 6) + colored(ma, 4);
    });
    TAGS.forEach(function (t) {
        var c = t[3] ? "#20f0ff" : "#f0a030";
        out += '<g class="tag"><path d="M' + t[0] + " " + (t[1] + 16) + 'h-10" stroke="' + c + '"/>' +
            '<rect x="' + (t[0] + .5) + '" y="' + (t[1] + .5) + '" width="114" height="32" fill="none" stroke="' + c + '"/>' +
            '<text x="' + (t[0] + 2) + '" y="' + (t[1] + 26) + '" fill="' + c + '">' + t[2] + '</text></g>';
    });
    document.getElementById("marks").innerHTML = out;
}

function drawOscillator() {
    var out = rect(14, 987, 1640, 65, "#0c1a3e") + rect(14, 1052, 1640, 28, "#400f18");
    [1025, 1050, 1076].forEach(function (y) { out += rect(14, y, 1640, 2, "#020210"); });
    [166, 478, 1078].forEach(function (x) { out += rect(x - 1, 987, 3, 93, "#f01010"); });
    [214, 694, 1654].forEach(function (x) { out += rect(x - 1, 987, 3, 93, "#30f0f8"); });
    out += line("190.5,987 190.5,1080", "#b0b8d0", 1, "5 3");
    out += line(SIGNAL, "#fff", 1, "3 2") + line(AVG, "#f09428", 2);
    document.getElementById("osc").innerHTML = out;
}

drawChart();
drawOscillator();
```
